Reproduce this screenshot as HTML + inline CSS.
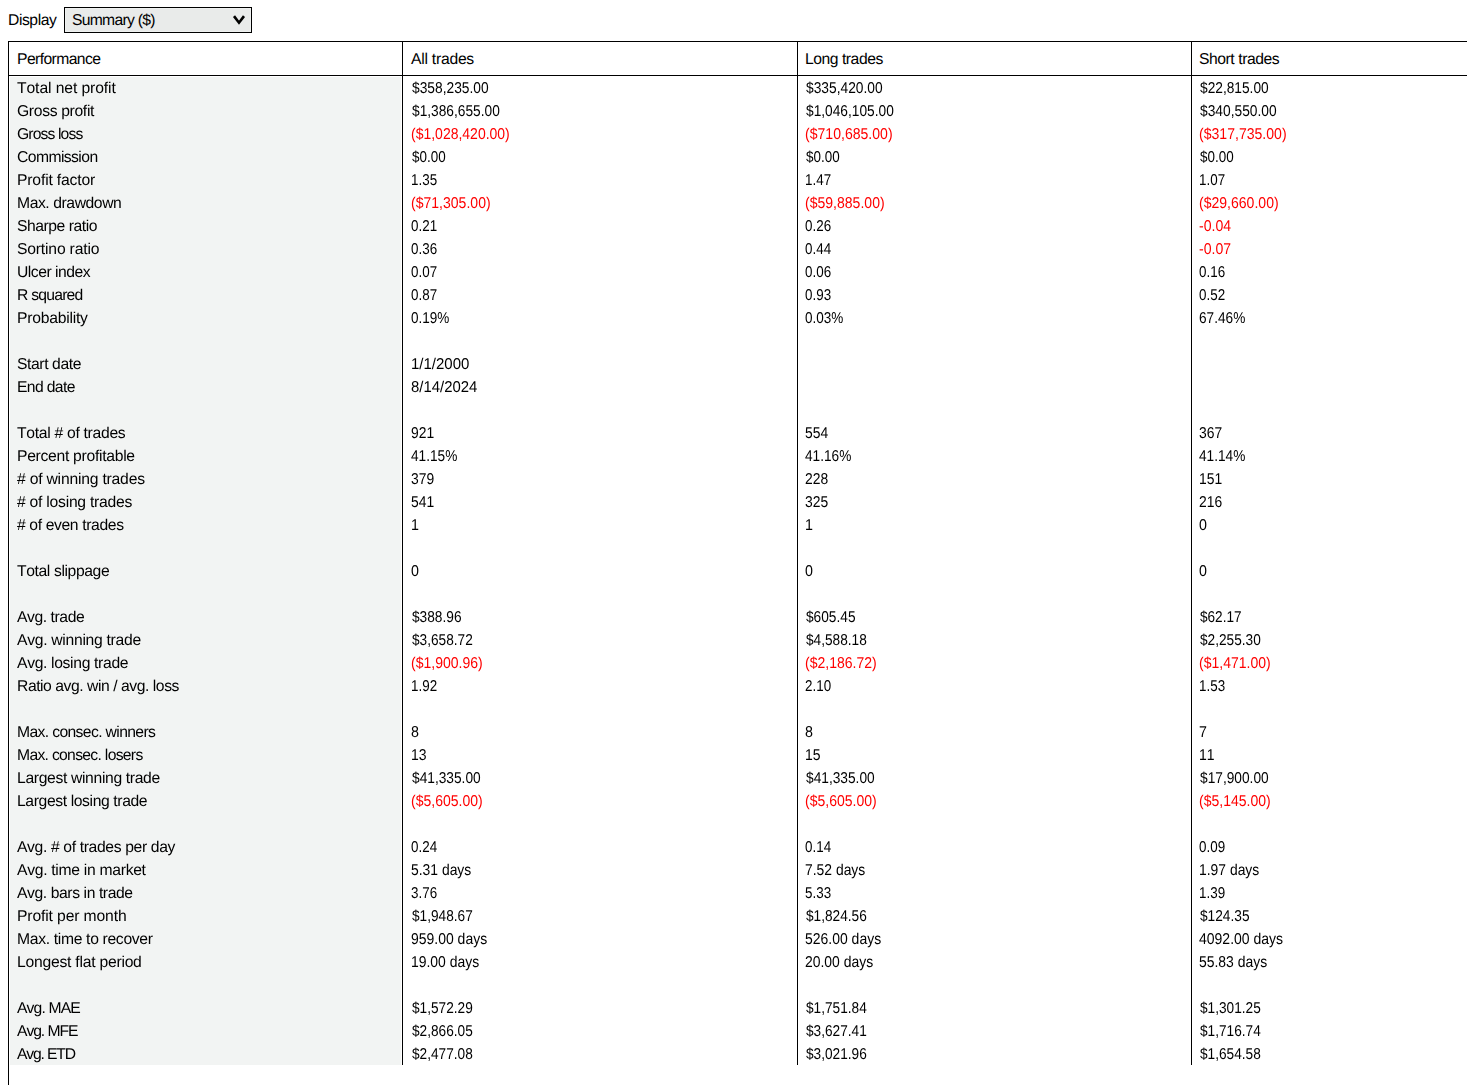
<!DOCTYPE html>
<html><head><meta charset="utf-8"><title>Performance</title>
<style>
html,body{margin:0;padding:0;background:#fff;}
body{width:1467px;height:1085px;overflow:hidden;position:relative;font-family:"Liberation Sans",sans-serif;font-size:15.7px;color:#000;text-rendering:geometricPrecision;font-kerning:none;}
.a{position:absolute;}
.ln{position:absolute;background:#000;}
.t{position:absolute;white-space:nowrap;height:23px;line-height:23px;}
.r{color:#f00;}
.hd{font-size:15.7px;}
.sx{transform-origin:0 50%;}
</style></head><body>

<div class="t hd" style="left:8px;top:9px;letter-spacing:-0.438px;">Display</div>
<div class="a" style="left:64px;top:7px;width:186px;height:24px;border:1px solid #000;background:#e9ebea;box-shadow:inset 0 0 0 1px #eff1f0;"></div>
<div class="t hd" style="left:72px;top:9px;letter-spacing:-0.723px;">Summary ($)</div>
<svg class="a" style="left:230px;top:12px;" width="18" height="16" viewBox="0 0 18 16"><path d="M4.0 4.1 L9 10.7 L14.0 4.1" fill="none" stroke="#000" stroke-width="2.6" stroke-linecap="butt" stroke-linejoin="miter"/></svg>
<div class="a" style="left:10px;top:77px;width:391px;height:988px;background:#f2f4f3;"></div>
<div class="ln" style="left:8px;top:41px;width:1459px;height:1px;"></div>
<div class="ln" style="left:8px;top:75px;width:1459px;height:1px;"></div>
<div class="ln" style="left:8px;top:41px;width:1px;height:1044px;"></div>
<div class="ln" style="left:402px;top:41px;width:1px;height:1024px;"></div>
<div class="ln" style="left:797px;top:41px;width:1px;height:1024px;"></div>
<div class="ln" style="left:1191px;top:41px;width:1px;height:1024px;"></div>
<div class="t hd" style="left:17px;top:48px;letter-spacing:-0.585px;">Performance</div>
<div class="t hd" style="left:411px;top:48px;letter-spacing:-0.242px;">All trades</div>
<div class="t hd" style="left:805px;top:48px;letter-spacing:-0.461px;">Long trades</div>
<div class="t hd" style="left:1199px;top:48px;letter-spacing:-0.441px;">Short trades</div>
<div class="a" style="left:0;top:0;width:1467px;height:1085px;will-change:transform;">
<div class="t" style="left:17px;top:77px;letter-spacing:-0.095px;">Total net profit</div>
<div class="t sx" style="left:411.6px;top:77px;transform:scaleX(0.8782);">$358,235.00</div>
<div class="t sx" style="left:805.6px;top:77px;transform:scaleX(0.8782);">$335,420.00</div>
<div class="t sx" style="left:1199.6px;top:77px;transform:scaleX(0.8747);">$22,815.00</div>
<div class="t" style="left:17px;top:100px;letter-spacing:-0.335px;">Gross profit</div>
<div class="t sx" style="left:411.6px;top:100px;transform:scaleX(0.8754);">$1,386,655.00</div>
<div class="t sx" style="left:805.6px;top:100px;transform:scaleX(0.8754);">$1,046,105.00</div>
<div class="t sx" style="left:1199.6px;top:100px;transform:scaleX(0.8782);">$340,550.00</div>
<div class="t" style="left:17px;top:123px;letter-spacing:-0.867px;">Gross loss</div>
<div class="t r sx" style="left:411.3px;top:123px;transform:scaleX(0.8916);">($1,028,420.00)</div>
<div class="t r sx" style="left:805.3px;top:123px;transform:scaleX(0.8965);">($710,685.00)</div>
<div class="t r sx" style="left:1199.3px;top:123px;transform:scaleX(0.8965);">($317,735.00)</div>
<div class="t" style="left:17px;top:146px;letter-spacing:-0.572px;">Commission</div>
<div class="t sx" style="left:411.6px;top:146px;transform:scaleX(0.8567);">$0.00</div>
<div class="t sx" style="left:805.6px;top:146px;transform:scaleX(0.8567);">$0.00</div>
<div class="t sx" style="left:1199.6px;top:146px;transform:scaleX(0.8567);">$0.00</div>
<div class="t" style="left:17px;top:169px;letter-spacing:-0.161px;">Profit factor</div>
<div class="t sx" style="left:411.1px;top:169px;transform:scaleX(0.8542);">1.35</div>
<div class="t sx" style="left:805.1px;top:169px;transform:scaleX(0.8542);">1.47</div>
<div class="t sx" style="left:1199.1px;top:169px;transform:scaleX(0.8542);">1.07</div>
<div class="t" style="left:17px;top:192px;letter-spacing:-0.422px;">Max. drawdown</div>
<div class="t r sx" style="left:411.3px;top:192px;transform:scaleX(0.8950);">($71,305.00)</div>
<div class="t r sx" style="left:805.3px;top:192px;transform:scaleX(0.8950);">($59,885.00)</div>
<div class="t r sx" style="left:1199.3px;top:192px;transform:scaleX(0.8950);">($29,660.00)</div>
<div class="t" style="left:17px;top:215px;letter-spacing:-0.459px;">Sharpe ratio</div>
<div class="t sx" style="left:411.1px;top:215px;transform:scaleX(0.8542);">0.21</div>
<div class="t sx" style="left:805.1px;top:215px;transform:scaleX(0.8542);">0.26</div>
<div class="t r sx" style="left:1199.1px;top:215px;transform:scaleX(0.8973);">-0.04</div>
<div class="t" style="left:17px;top:238px;letter-spacing:-0.181px;">Sortino ratio</div>
<div class="t sx" style="left:411.1px;top:238px;transform:scaleX(0.8542);">0.36</div>
<div class="t sx" style="left:805.1px;top:238px;transform:scaleX(0.8542);">0.44</div>
<div class="t r sx" style="left:1199.1px;top:238px;transform:scaleX(0.8973);">-0.07</div>
<div class="t" style="left:17px;top:261px;letter-spacing:-0.476px;">Ulcer index</div>
<div class="t sx" style="left:411.1px;top:261px;transform:scaleX(0.8542);">0.07</div>
<div class="t sx" style="left:805.1px;top:261px;transform:scaleX(0.8542);">0.06</div>
<div class="t sx" style="left:1199.1px;top:261px;transform:scaleX(0.8542);">0.16</div>
<div class="t" style="left:17px;top:284px;letter-spacing:-0.763px;">R squared</div>
<div class="t sx" style="left:411.1px;top:284px;transform:scaleX(0.8542);">0.87</div>
<div class="t sx" style="left:805.1px;top:284px;transform:scaleX(0.8542);">0.93</div>
<div class="t sx" style="left:1199.1px;top:284px;transform:scaleX(0.8542);">0.52</div>
<div class="t" style="left:17px;top:307px;letter-spacing:-0.237px;">Probability</div>
<div class="t sx" style="left:411.1px;top:307px;transform:scaleX(0.8625);">0.19%</div>
<div class="t sx" style="left:805.1px;top:307px;transform:scaleX(0.8625);">0.03%</div>
<div class="t sx" style="left:1199.1px;top:307px;transform:scaleX(0.8703);">67.46%</div>
<div class="t" style="left:17px;top:353px;letter-spacing:-0.394px;">Start date</div>
<div class="t sx" style="left:411.1px;top:353px;transform:scaleX(0.9559);">1/1/2000</div>
<div class="t" style="left:17px;top:376px;letter-spacing:-0.631px;">End date</div>
<div class="t sx" style="left:411.1px;top:376px;transform:scaleX(0.9504);">8/14/2024</div>
<div class="t" style="left:17px;top:422px;letter-spacing:-0.294px;">Total # of trades</div>
<div class="t sx" style="left:411.1px;top:422px;transform:scaleX(0.8849);">921</div>
<div class="t sx" style="left:805.1px;top:422px;transform:scaleX(0.8849);">554</div>
<div class="t sx" style="left:1199.1px;top:422px;transform:scaleX(0.8849);">367</div>
<div class="t" style="left:17px;top:445px;letter-spacing:-0.288px;">Percent profitable</div>
<div class="t sx" style="left:411.1px;top:445px;transform:scaleX(0.8703);">41.15%</div>
<div class="t sx" style="left:805.1px;top:445px;transform:scaleX(0.8703);">41.16%</div>
<div class="t sx" style="left:1199.1px;top:445px;transform:scaleX(0.8703);">41.14%</div>
<div class="t" style="left:17px;top:468px;letter-spacing:-0.205px;"># of winning trades</div>
<div class="t sx" style="left:411.1px;top:468px;transform:scaleX(0.8849);">379</div>
<div class="t sx" style="left:805.1px;top:468px;transform:scaleX(0.8849);">228</div>
<div class="t sx" style="left:1199.1px;top:468px;transform:scaleX(0.8849);">151</div>
<div class="t" style="left:17px;top:491px;letter-spacing:-0.242px;"># of losing trades</div>
<div class="t sx" style="left:411.1px;top:491px;transform:scaleX(0.8849);">541</div>
<div class="t sx" style="left:805.1px;top:491px;transform:scaleX(0.8849);">325</div>
<div class="t sx" style="left:1199.1px;top:491px;transform:scaleX(0.8849);">216</div>
<div class="t" style="left:17px;top:514px;letter-spacing:-0.368px;"># of even trades</div>
<div class="t sx" style="left:411.1px;top:514px;transform:scaleX(0.9098);">1</div>
<div class="t sx" style="left:805.1px;top:514px;transform:scaleX(0.9098);">1</div>
<div class="t sx" style="left:1199.1px;top:514px;transform:scaleX(0.9098);">0</div>
<div class="t" style="left:17px;top:560px;letter-spacing:-0.384px;">Total slippage</div>
<div class="t sx" style="left:411.1px;top:560px;transform:scaleX(0.9098);">0</div>
<div class="t sx" style="left:805.1px;top:560px;transform:scaleX(0.9098);">0</div>
<div class="t sx" style="left:1199.1px;top:560px;transform:scaleX(0.9098);">0</div>
<div class="t" style="left:17px;top:606px;letter-spacing:-0.427px;">Avg. trade</div>
<div class="t sx" style="left:411.6px;top:606px;transform:scaleX(0.8733);">$388.96</div>
<div class="t sx" style="left:805.6px;top:606px;transform:scaleX(0.8733);">$605.45</div>
<div class="t sx" style="left:1199.6px;top:606px;transform:scaleX(0.8667);">$62.17</div>
<div class="t" style="left:17px;top:629px;letter-spacing:-0.29px;">Avg. winning trade</div>
<div class="t sx" style="left:411.6px;top:629px;transform:scaleX(0.8701);">$3,658.72</div>
<div class="t sx" style="left:805.6px;top:629px;transform:scaleX(0.8701);">$4,588.18</div>
<div class="t sx" style="left:1199.6px;top:629px;transform:scaleX(0.8701);">$2,255.30</div>
<div class="t" style="left:17px;top:652px;letter-spacing:-0.335px;">Avg. losing trade</div>
<div class="t r sx" style="left:411.3px;top:652px;transform:scaleX(0.8933);">($1,900.96)</div>
<div class="t r sx" style="left:805.3px;top:652px;transform:scaleX(0.8933);">($2,186.72)</div>
<div class="t r sx" style="left:1199.3px;top:652px;transform:scaleX(0.8933);">($1,471.00)</div>
<div class="t" style="left:17px;top:675px;letter-spacing:-0.445px;">Ratio avg. win / avg. loss</div>
<div class="t sx" style="left:411.1px;top:675px;transform:scaleX(0.8542);">1.92</div>
<div class="t sx" style="left:805.1px;top:675px;transform:scaleX(0.8542);">2.10</div>
<div class="t sx" style="left:1199.1px;top:675px;transform:scaleX(0.8542);">1.53</div>
<div class="t" style="left:17px;top:721px;letter-spacing:-0.63px;">Max. consec. winners</div>
<div class="t sx" style="left:411.1px;top:721px;transform:scaleX(0.9098);">8</div>
<div class="t sx" style="left:805.1px;top:721px;transform:scaleX(0.9098);">8</div>
<div class="t sx" style="left:1199.1px;top:721px;transform:scaleX(0.9098);">7</div>
<div class="t" style="left:17px;top:744px;letter-spacing:-0.687px;">Max. consec. losers</div>
<div class="t sx" style="left:411.1px;top:744px;transform:scaleX(0.8915);">13</div>
<div class="t sx" style="left:805.1px;top:744px;transform:scaleX(0.8915);">15</div>
<div class="t sx" style="left:1199.1px;top:744px;transform:scaleX(0.8915);">11</div>
<div class="t" style="left:17px;top:767px;letter-spacing:-0.339px;">Largest winning trade</div>
<div class="t sx" style="left:411.6px;top:767px;transform:scaleX(0.8747);">$41,335.00</div>
<div class="t sx" style="left:805.6px;top:767px;transform:scaleX(0.8747);">$41,335.00</div>
<div class="t sx" style="left:1199.6px;top:767px;transform:scaleX(0.8747);">$17,900.00</div>
<div class="t" style="left:17px;top:790px;letter-spacing:-0.379px;">Largest losing trade</div>
<div class="t r sx" style="left:411.3px;top:790px;transform:scaleX(0.8933);">($5,605.00)</div>
<div class="t r sx" style="left:805.3px;top:790px;transform:scaleX(0.8933);">($5,605.00)</div>
<div class="t r sx" style="left:1199.3px;top:790px;transform:scaleX(0.8933);">($5,145.00)</div>
<div class="t" style="left:17px;top:836px;letter-spacing:-0.356px;">Avg. # of trades per day</div>
<div class="t sx" style="left:411.1px;top:836px;transform:scaleX(0.8542);">0.24</div>
<div class="t sx" style="left:805.1px;top:836px;transform:scaleX(0.8542);">0.14</div>
<div class="t sx" style="left:1199.1px;top:836px;transform:scaleX(0.8542);">0.09</div>
<div class="t" style="left:17px;top:859px;letter-spacing:-0.293px;">Avg. time in market</div>
<div class="t sx" style="left:411.1px;top:859px;transform:scaleX(0.8856);">5.31 days</div>
<div class="t sx" style="left:805.1px;top:859px;transform:scaleX(0.8856);">7.52 days</div>
<div class="t sx" style="left:1199.1px;top:859px;transform:scaleX(0.8856);">1.97 days</div>
<div class="t" style="left:17px;top:882px;letter-spacing:-0.407px;">Avg. bars in trade</div>
<div class="t sx" style="left:411.1px;top:882px;transform:scaleX(0.8542);">3.76</div>
<div class="t sx" style="left:805.1px;top:882px;transform:scaleX(0.8542);">5.33</div>
<div class="t sx" style="left:1199.1px;top:882px;transform:scaleX(0.8542);">1.39</div>
<div class="t" style="left:17px;top:905px;letter-spacing:-0.131px;">Profit per month</div>
<div class="t sx" style="left:411.6px;top:905px;transform:scaleX(0.8701);">$1,948.67</div>
<div class="t sx" style="left:805.6px;top:905px;transform:scaleX(0.8701);">$1,824.56</div>
<div class="t sx" style="left:1199.6px;top:905px;transform:scaleX(0.8733);">$124.35</div>
<div class="t" style="left:17px;top:928px;letter-spacing:-0.325px;">Max. time to recover</div>
<div class="t sx" style="left:411.1px;top:928px;transform:scaleX(0.8907);">959.00 days</div>
<div class="t sx" style="left:805.1px;top:928px;transform:scaleX(0.8907);">526.00 days</div>
<div class="t sx" style="left:1199.1px;top:928px;transform:scaleX(0.8926);">4092.00 days</div>
<div class="t" style="left:17px;top:951px;letter-spacing:-0.235px;">Longest flat period</div>
<div class="t sx" style="left:411.1px;top:951px;transform:scaleX(0.8883);">19.00 days</div>
<div class="t sx" style="left:805.1px;top:951px;transform:scaleX(0.8883);">20.00 days</div>
<div class="t sx" style="left:1199.1px;top:951px;transform:scaleX(0.8883);">55.83 days</div>
<div class="t" style="left:17px;top:997px;letter-spacing:-0.852px;">Avg. MAE</div>
<div class="t sx" style="left:411.6px;top:997px;transform:scaleX(0.8701);">$1,572.29</div>
<div class="t sx" style="left:805.6px;top:997px;transform:scaleX(0.8701);">$1,751.84</div>
<div class="t sx" style="left:1199.6px;top:997px;transform:scaleX(0.8701);">$1,301.25</div>
<div class="t" style="left:17px;top:1020px;letter-spacing:-1.063px;">Avg. MFE</div>
<div class="t sx" style="left:411.6px;top:1020px;transform:scaleX(0.8701);">$2,866.05</div>
<div class="t sx" style="left:805.6px;top:1020px;transform:scaleX(0.8701);">$3,627.41</div>
<div class="t sx" style="left:1199.6px;top:1020px;transform:scaleX(0.8701);">$1,716.74</div>
<div class="t" style="left:17px;top:1043px;letter-spacing:-1.158px;">Avg. ETD</div>
<div class="t sx" style="left:411.6px;top:1043px;transform:scaleX(0.8701);">$2,477.08</div>
<div class="t sx" style="left:805.6px;top:1043px;transform:scaleX(0.8701);">$3,021.96</div>
<div class="t sx" style="left:1199.6px;top:1043px;transform:scaleX(0.8701);">$1,654.58</div>
</div>
</body></html>
